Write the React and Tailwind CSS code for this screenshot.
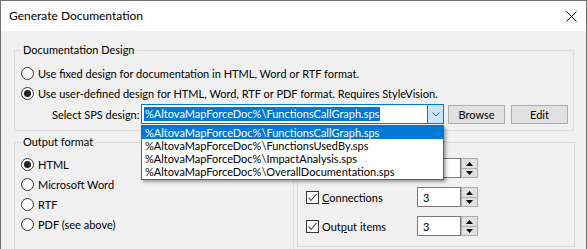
import React from "react";

function Radio({ checked }) {
  return (
    <span className="relative flex h-[13px] w-[13px] shrink-0 items-center justify-center rounded-full border border-[#333333] bg-white">
      {checked && <span className="h-[7px] w-[7px] rounded-full bg-[#222222]" />}
    </span>
  );
}

function RadioRow({ checked, children, className = "" }) {
  return (
    <div className={"flex h-[20px] items-center gap-[4px] " + className}>
      <Radio checked={checked} />
      <span className="whitespace-nowrap leading-none">{children}</span>
    </div>
  );
}

function Checkbox() {
  return (
    <span className="flex h-[13px] w-[13px] shrink-0 items-center justify-center border border-[#333333] bg-white">
      <svg width="11" height="11" viewBox="0 0 11 11" fill="none">
        <path d="M1.5 5.5 L4 8.5 L9.5 2" stroke="#333333" strokeWidth="1.1" />
      </svg>
    </span>
  );
}

function Spinner({ value }) {
  return (
    <div className="flex h-[20px]">
      <div className="flex h-[20px] w-[44px] items-center border border-[#7a7a7a] bg-white pl-[5px] leading-none">
        {value}
      </div>
      <div className="flex w-[17px] flex-col">
        <div className="flex h-[10px] items-center justify-center border border-b-0 border-[#adadad] bg-[#e1e1e1]">
          <svg width="7" height="4" viewBox="0 0 7 4"><path d="M0 4 L3.5 0 L7 4 Z" fill="#000" /></svg>
        </div>
        <div className="flex h-[10px] items-center justify-center border border-[#adadad] bg-[#e1e1e1]">
          <svg width="7" height="4" viewBox="0 0 7 4"><path d="M0 0 L3.5 4 L7 0 Z" fill="#000" /></svg>
        </div>
      </div>
    </div>
  );
}

function CheckRow({ label, value }) {
  return (
    <div className="flex h-[20px] items-center">
      <div className="flex w-[111px] items-center gap-[3px]">
        <Checkbox />
        {label && <span className="whitespace-nowrap leading-none">{label}</span>}
      </div>
      <Spinner value={value} />
    </div>
  );
}

const files = [
  "%AltovaMapForceDoc%\\FunctionsCallGraph.sps",
  "%AltovaMapForceDoc%\\FunctionsUsedBy.sps",
  "%AltovaMapForceDoc%\\ImpactAnalysis.sps",
  "%AltovaMapForceDoc%\\OverallDocumentation.sps",
];

export default function App() {
  return (
    <div className="relative h-[249px] w-[587px] overflow-hidden border-x border-t border-[#707070] bg-[#f0f0f0] font-['Lato',sans-serif] text-[11px] text-black">
      {/* Title bar */}
      <div className="flex h-[30px] items-center justify-between bg-white pl-[8px] pr-[9px]">
        <span className="text-[12px] leading-none">Generate Documentation</span>
        <svg width="11" height="11" viewBox="0 0 11 11">
          <path d="M0.5 0.5 L10.5 10.5 M10.5 0.5 L0.5 10.5" stroke="#000" strokeWidth="1" />
        </svg>
      </div>

      <div className="pl-[13px] pt-[19px]">
        {/* Documentation Design group */}
        <div className="relative h-[81px] w-[560px] border border-[#dcdcdc] pl-[6px] pt-[12px]">
          <span className="absolute left-[6px] top-[-8px] bg-[#f0f0f0] px-[2px] leading-[14px]">Documentation Design</span>
          <RadioRow checked={false}>Use fixed design for documentation in HTML, Word or RTF format.</RadioRow>
          <RadioRow checked={true}>Use user-defined design for HTML, Word, RTF or PDF format. Requires StyleVision.</RadioRow>
          <div className="mt-[1px] flex h-[20px] items-start">
            <span className="flex h-[20px] w-[120px] items-center pl-[31px] leading-none whitespace-nowrap">Select SPS design:</span>
            <div className="flex h-[20px] w-[303px] border border-[#0078d7] bg-white">
              <div className="flex flex-1 items-center pl-[2px]">
                <span className="bg-[#0078d7] px-[1px] leading-[14px] text-white whitespace-nowrap">{files[0]}</span>
              </div>
              <div className="flex w-[16px] items-center justify-center border-l border-[#0078d7] bg-[#cce4f7]">
                <svg width="8" height="5" viewBox="0 0 8 5" fill="none"><path d="M0.5 0.5 L4 4 L7.5 0.5" stroke="#555" strokeWidth="1" /></svg>
              </div>
            </div>
            <button className="ml-[4px] mt-[1px] flex h-[19px] w-[57px] items-center justify-center border border-[#adadad] bg-[#e1e1e1] leading-none">Browse</button>
            <button className="ml-[6px] mt-[1px] flex h-[19px] w-[57px] items-center justify-center border border-[#adadad] bg-[#e1e1e1] leading-none">Edit</button>
          </div>
        </div>

        <div className="mt-[11px] flex gap-[3px]">
          {/* Output format */}
          <div className="relative h-[120px] w-[280px] border border-[#dcdcdc] pl-[6px] pt-[11px]">
            <span className="absolute left-[6px] top-[-8px] bg-[#f0f0f0] px-[2px] leading-[14px]">Output format</span>
            <RadioRow checked={true}>HTML</RadioRow>
            <RadioRow checked={false}>Microsoft Word</RadioRow>
            <RadioRow checked={false}>RTF</RadioRow>
            <RadioRow checked={false}>PDF (see above)</RadioRow>
          </div>
          {/* Options (label and first row label hidden under the open list) */}
          <div className="relative flex h-[105px] w-[278px] flex-col gap-[9px] border border-[#dcdcdc] pl-[8px] pt-[15px]">
            <CheckRow label={null} value="3" />
            <CheckRow label={<><span className="underline">C</span>onnections</>} value="3" />
            <CheckRow label={<>Out<span className="underline">p</span>ut items</>} value="3" />
          </div>
        </div>
      </div>

      {/* Open dropdown list */}
      <div className="absolute left-[140px] top-[124px] w-[303px] border border-[#0078d7] bg-white pb-[1px] shadow-[2px_2px_3px_rgba(0,0,0,0.35)]">
        {files.map((f, i) => (
          <div
            key={f}
            className={
              "h-[13px] pl-[3px] leading-[13px] whitespace-nowrap " +
              (i === 0 ? "bg-[#0078d7] text-white" : "text-black")
            }
          >
            {f}
          </div>
        ))}
      </div>
    </div>
  );
}
